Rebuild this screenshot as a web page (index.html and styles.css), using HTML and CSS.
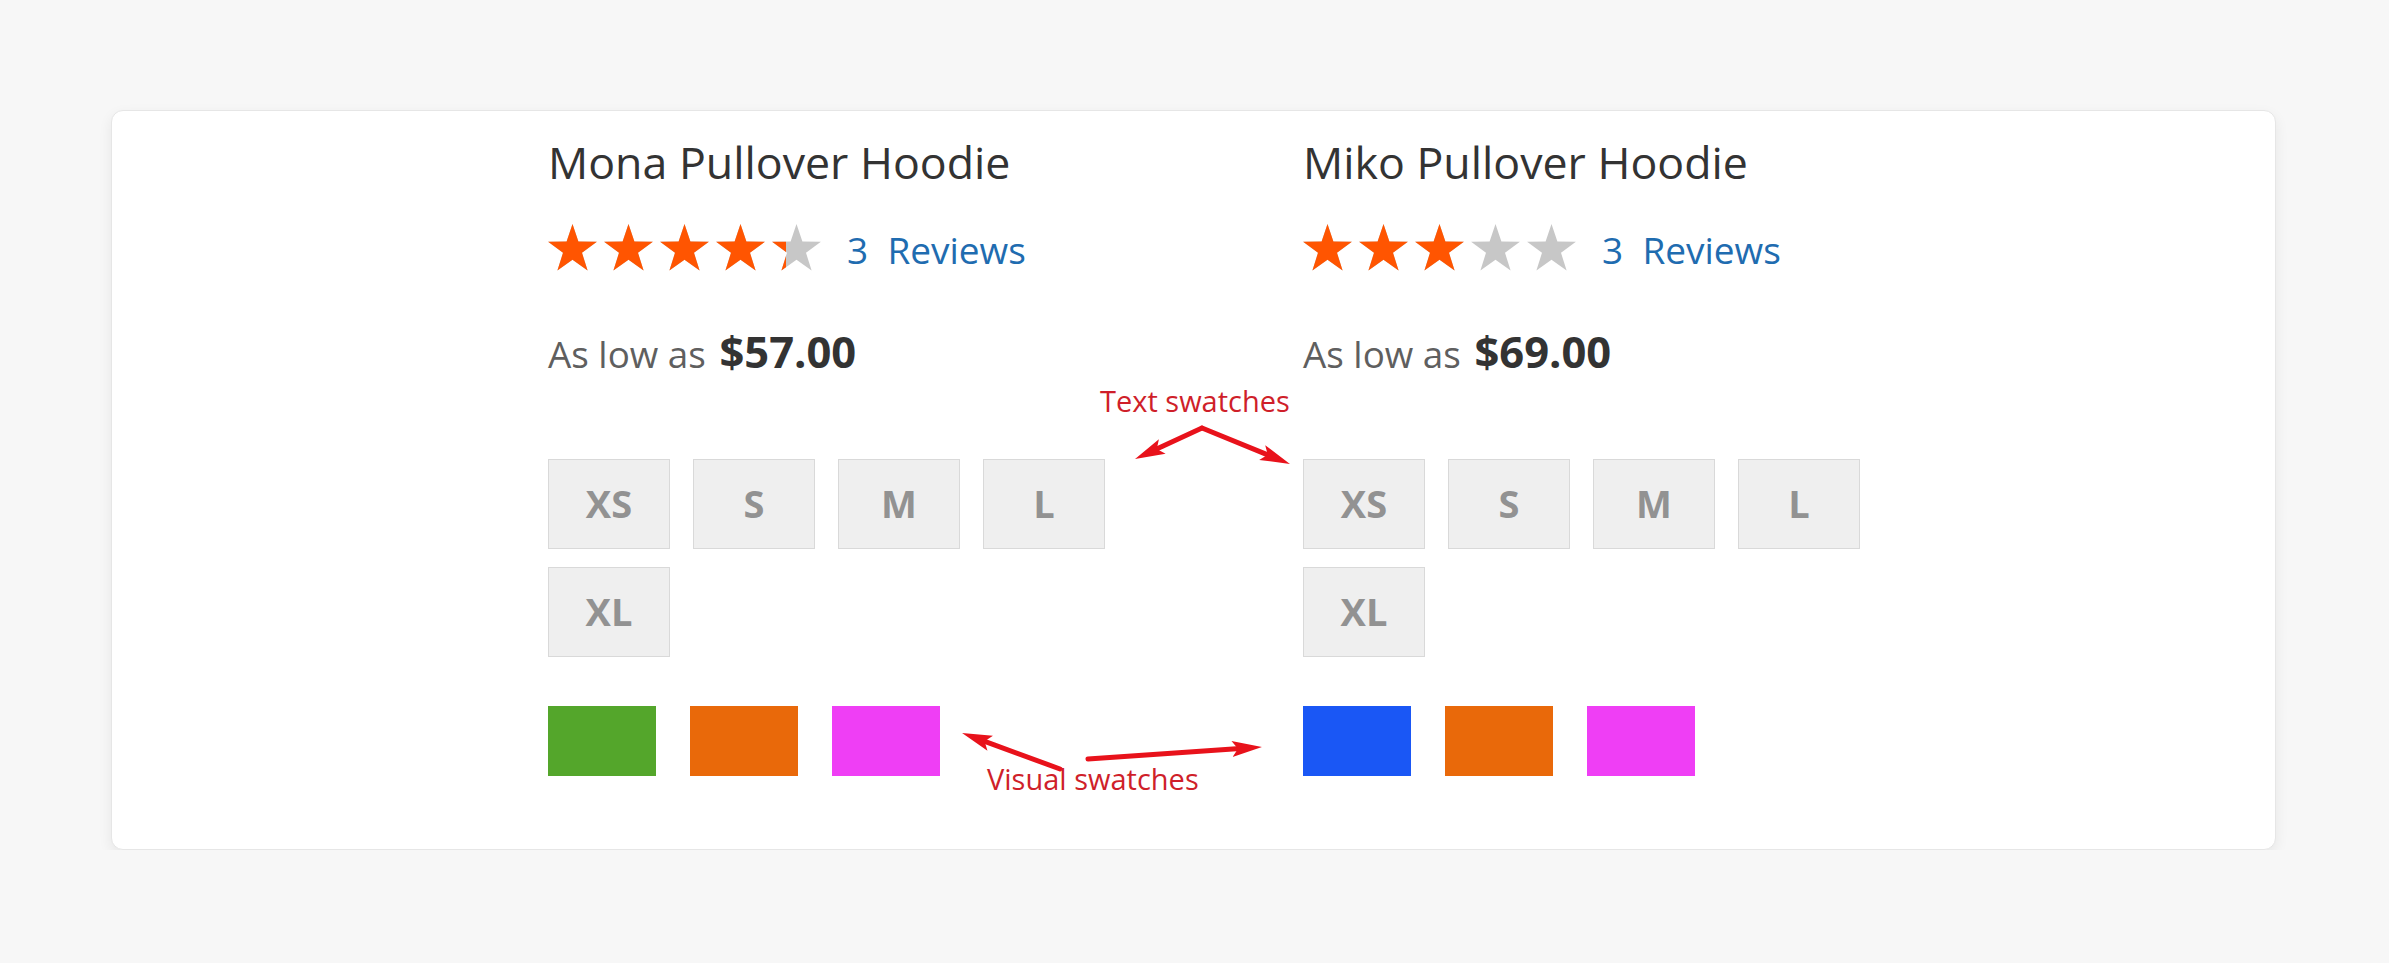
FILE: index.html
```html
<!DOCTYPE html>
<html lang="en">
<head>
  <meta charset="UTF-8">
  <title>Swatches</title>
  <link rel="stylesheet" href="styles.css">
</head>
<body>

  <!-- shared star shape -->
  <svg class="defs" width="0" height="0" aria-hidden="true">
    <defs>
      <symbol id="star" viewBox="0 0 49 47">
        <polygon points="24.5,0 30.4,17.6 48.9,17.8 34,28.8 39.6,46.5 24.5,35.7 9.4,46.5 15,28.8 0.1,17.8 18.6,17.6"/>
      </symbol>
      <marker id="head" viewBox="0 0 30 18" markerWidth="30" markerHeight="18" markerUnits="userSpaceOnUse" refX="8" refY="9" orient="auto">
        <path d="M0,1 L30,9 L0,17 L6,9 z" fill="#e8121b"/>
      </marker>
    </defs>
  </svg>

  <div class="page">
    <div class="card">

      <div class="product">
        <h2 class="name">Mona Pullover Hoodie</h2>
        <div class="rating">
          <div class="stars">
            <svg class="stars-row off" width="280" height="47">
              <use href="#star" x="0" width="49" height="47"/>
              <use href="#star" x="56" width="49" height="47"/>
              <use href="#star" x="112" width="49" height="47"/>
              <use href="#star" x="168" width="49" height="47"/>
              <use href="#star" x="224" width="49" height="47"/>
            </svg>
            <div class="stars-fill" style="width: 85%">
              <svg class="stars-row on" width="280" height="47">
                <use href="#star" x="0" width="49" height="47"/>
                <use href="#star" x="56" width="49" height="47"/>
                <use href="#star" x="112" width="49" height="47"/>
                <use href="#star" x="168" width="49" height="47"/>
                <use href="#star" x="224" width="49" height="47"/>
              </svg>
            </div>
          </div>
          <a class="reviews" href="#">3 &nbsp;Reviews</a>
        </div>
        <div class="price">As low as <span class="amount">$57.00</span></div>
        <div class="sizes">
          <div class="size">XS</div>
          <div class="size">S</div>
          <div class="size">M</div>
          <div class="size">L</div>
          <div class="size">XL</div>
        </div>
        <div class="colors">
          <div class="color green"></div>
          <div class="color orange"></div>
          <div class="color pink"></div>
        </div>
      </div>

      <div class="product">
        <h2 class="name">Miko Pullover Hoodie</h2>
        <div class="rating">
          <div class="stars">
            <svg class="stars-row off" width="280" height="47">
              <use href="#star" x="0" width="49" height="47"/>
              <use href="#star" x="56" width="49" height="47"/>
              <use href="#star" x="112" width="49" height="47"/>
              <use href="#star" x="168" width="49" height="47"/>
              <use href="#star" x="224" width="49" height="47"/>
            </svg>
            <div class="stars-fill" style="width: 60%">
              <svg class="stars-row on" width="280" height="47">
                <use href="#star" x="0" width="49" height="47"/>
                <use href="#star" x="56" width="49" height="47"/>
                <use href="#star" x="112" width="49" height="47"/>
                <use href="#star" x="168" width="49" height="47"/>
                <use href="#star" x="224" width="49" height="47"/>
              </svg>
            </div>
          </div>
          <a class="reviews" href="#">3 &nbsp;Reviews</a>
        </div>
        <div class="price">As low as <span class="amount">$69.00</span></div>
        <div class="sizes">
          <div class="size">XS</div>
          <div class="size">S</div>
          <div class="size">M</div>
          <div class="size">L</div>
          <div class="size">XL</div>
        </div>
        <div class="colors">
          <div class="color blue"></div>
          <div class="color orange"></div>
          <div class="color pink"></div>
        </div>
      </div>

      <!-- annotations drawn over the card -->
      <svg class="arrows" width="2163" height="740">
        <g transform="translate(-112 -111)" stroke="#e8121b" stroke-width="5" stroke-linecap="round" fill="none">
          <line x1="1202" y1="428" x2="1155" y2="449.8" marker-end="url(#head)"/>
          <line x1="1202" y1="428" x2="1269.6" y2="455.6" marker-end="url(#head)"/>
          <line x1="1060" y1="769" x2="982.7" y2="740.6" marker-end="url(#head)"/>
          <line x1="1088" y1="759" x2="1240" y2="748.5" marker-end="url(#head)"/>
        </g>
      </svg>
      <span class="note note-text">Text swatches</span>
      <span class="note note-visual">Visual swatches</span>
    </div>
  </div>

</body>
</html>
```

FILE: styles.css
```css
body {
  margin: 0;
  background: #f7f7f7;
  font-family: "Open Sans", sans-serif;
}

.defs {
  position: absolute;
  width: 0;
  height: 0;
}

.page {
  padding: 110px 0 0 111px;
}

.card {
  position: relative;
  box-sizing: border-box;
  width: 2165px;
  display: flex;
  padding: 21px 0 73px 436px;
  background: #ffffff;
  border: 1px solid #e6e6e6;
  border-radius: 12px;
  box-shadow: 0 5px 14px rgba(0, 0, 0, 0.07);
}

.product {
  width: 755px;
  display: flex;
  flex-direction: column;
  align-items: flex-start;
}

.name {
  margin: 0;
  font-size: 44.7px;
  font-weight: 400;
  line-height: 60px;
  color: #333333;
}

.rating {
  display: flex;
  align-items: flex-start;
  height: 47px;
  margin-top: 32px;
}

.stars {
  position: relative;
  width: 280px;
  height: 47px;
}

.stars-row {
  display: block;
}

.stars-row.off {
  fill: #c7c7c7;
}

.stars-row.on {
  fill: #ff5501;
}

.stars-fill {
  position: absolute;
  top: 0;
  left: 0;
  height: 47px;
  overflow: hidden;
}

.reviews {
  margin: 2px 0 0 19px;
  font-size: 37px;
  line-height: 47px;
  color: #1f6cb0;
  text-decoration: none;
}

.price {
  margin-top: 55px;
  font-size: 36.8px;
  line-height: 56px;
  color: #5f5f5f;
}

.amount {
  margin-left: 4px;
  font-size: 43.5px;
  font-weight: 700;
  line-height: 1;
  color: #333333;
}

.sizes {
  display: grid;
  grid-template-columns: repeat(4, 122px);
  gap: 18px 23px;
  margin-top: 77px;
}

.size {
  box-sizing: border-box;
  height: 90px;
  background: #efefef;
  border: 1px solid #d9d9d9;
  font-size: 38px;
  font-weight: 700;
  line-height: 86px;
  text-align: center;
  color: #929292;
}

.colors {
  display: flex;
  gap: 34px;
  margin-top: 49px;
}

.color {
  width: 108px;
  height: 70px;
}

.green { background: #54a62b; }
.orange { background: #e9690a; }
.pink { background: #ef3ef5; }
.blue { background: #1a57f5; }

.arrows {
  position: absolute;
  top: 0;
  left: 0;
  pointer-events: none;
}

.note {
  position: absolute;
  font-size: 29px;
  line-height: 29px;
  color: #cf1f2a;
  white-space: nowrap;
}

.note-text {
  top: 275px;
  left: 988px;
}

.note-visual {
  top: 653px;
  left: 875px;
}
```
